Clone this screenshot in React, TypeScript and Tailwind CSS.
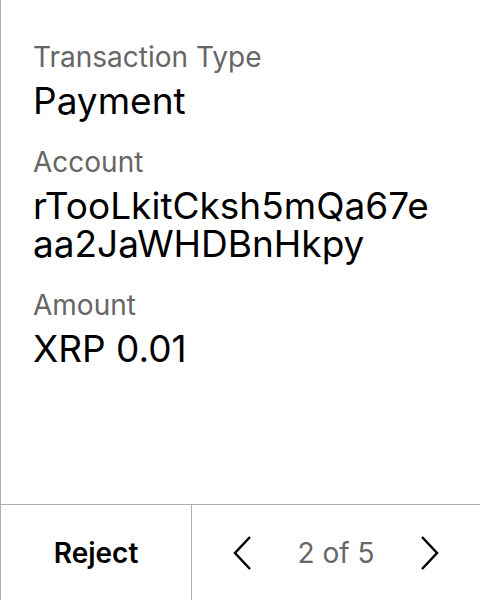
export default function App() {
  const fields = [
    { label: "Transaction Type", value: "Payment" },
    { label: "Account", value: "rTooLkitCksh5mQa67eaa2JaWHDBnHkpy" },
    { label: "Amount", value: "XRP 0.01" },
  ];

  return (
    <div className="flex h-[600px] w-[480px] flex-col border-l border-[#adadad] bg-white font-['Inter',sans-serif]">
      <div className="flex flex-1 flex-col gap-[26px] pl-8 pr-10 pt-[41px]">
        {fields.map((f) => (
          <div key={f.label} className="flex flex-col gap-[9px]">
            <div className="text-[28px] leading-8 text-[#666666]">{f.label}</div>
            <div className="break-all text-[37px] leading-[38px] text-black">{f.value}</div>
          </div>
        ))}
      </div>

      <div className="flex h-24 border-t border-[#adadad]">
        <button className="flex w-[191px] items-center justify-center border-r border-[#adadad] text-[28px] font-semibold text-black">
          Reject
        </button>
        <div className="flex flex-1 items-center justify-between px-[41px]">
          <svg width="20" height="40" viewBox="0 0 20 40" fill="none" stroke="black" strokeWidth="2.5">
            <path d="M17 4 L2 20 L17 36" />
          </svg>
          <span className="text-[28px] text-[#666666]">2 of 5</span>
          <svg width="20" height="40" viewBox="0 0 20 40" fill="none" stroke="black" strokeWidth="2.5">
            <path d="M3 4 L18 20 L3 36" />
          </svg>
        </div>
      </div>
    </div>
  );
}
